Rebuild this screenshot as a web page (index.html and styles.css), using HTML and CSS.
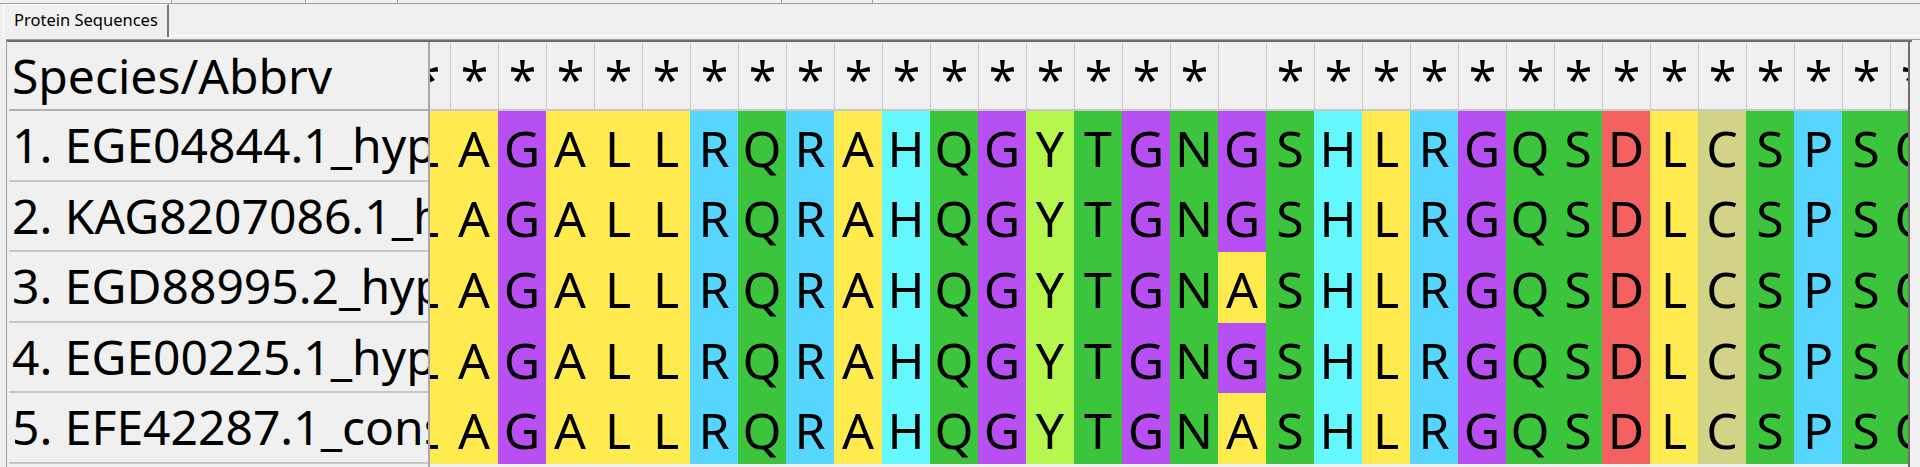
FILE: index.html
```html
<!DOCTYPE html>
<html>
<head>
<meta charset="utf-8">
<link rel="stylesheet" href="styles.css">
</head>
<body>
<div class="statusbar">
  <div class="seg s1"></div><div class="seg s2"></div><div class="seg s3"></div><div class="seg s4"></div><div class="seg s5"></div><div class="seg s6"></div>
</div>
<div class="tabbar">
  <div class="tab">Protein Sequences</div>
  <div class="tabrest"></div>
</div>
<div class="panel">
  <div class="frame">
    <div class="names">
      <div class="name head">Species/Abbrv</div>
      <div class="name">1. EGE04844.1_hypothetical_protein</div>
      <div class="name">2. KAG8207086.1_hypothetical_protein</div>
      <div class="name">3. EGD88995.2_hypothetical_protein</div>
      <div class="name">4. EGE00225.1_hypothetical_protein</div>
      <div class="name">5. EFE42287.1_conserved_hypothetical</div>
    </div>
    <div class="seqview">
      <div class="seqgrid">
        <span class="hd">*</span><span class="hd">*</span><span class="hd">*</span><span class="hd">*</span><span class="hd">*</span><span class="hd">*</span><span class="hd">*</span><span class="hd">*</span><span class="hd">*</span><span class="hd">*</span><span class="hd">*</span><span class="hd">*</span><span class="hd">*</span><span class="hd">*</span><span class="hd">*</span><span class="hd">*</span><span class="hd">*</span><span class="hd"></span><span class="hd">*</span><span class="hd">*</span><span class="hd">*</span><span class="hd">*</span><span class="hd">*</span><span class="hd">*</span><span class="hd">*</span><span class="hd">*</span><span class="hd">*</span><span class="hd">*</span><span class="hd">*</span><span class="hd">*</span><span class="hd">*</span><span class="hd">*</span>

        <span class="y">L</span><span class="y">A</span><span class="g">G</span><span class="y">A</span><span class="y">L</span><span class="y">L</span><span class="b">R</span><span class="n">Q</span><span class="b">R</span><span class="y">A</span><span class="c">H</span><span class="n">Q</span><span class="g">G</span><span class="l">Y</span><span class="n">T</span><span class="g">G</span><span class="n">N</span><span class="g">G</span><span class="n">S</span><span class="c">H</span><span class="y">L</span><span class="b">R</span><span class="g">G</span><span class="n">Q</span><span class="n">S</span><span class="d">D</span><span class="y">L</span><span class="k">C</span><span class="n">S</span><span class="b">P</span><span class="n">S</span><span class="n">Q</span>

        <span class="y">L</span><span class="y">A</span><span class="g">G</span><span class="y">A</span><span class="y">L</span><span class="y">L</span><span class="b">R</span><span class="n">Q</span><span class="b">R</span><span class="y">A</span><span class="c">H</span><span class="n">Q</span><span class="g">G</span><span class="l">Y</span><span class="n">T</span><span class="g">G</span><span class="n">N</span><span class="g">G</span><span class="n">S</span><span class="c">H</span><span class="y">L</span><span class="b">R</span><span class="g">G</span><span class="n">Q</span><span class="n">S</span><span class="d">D</span><span class="y">L</span><span class="k">C</span><span class="n">S</span><span class="b">P</span><span class="n">S</span><span class="n">Q</span>

        <span class="y">L</span><span class="y">A</span><span class="g">G</span><span class="y">A</span><span class="y">L</span><span class="y">L</span><span class="b">R</span><span class="n">Q</span><span class="b">R</span><span class="y">A</span><span class="c">H</span><span class="n">Q</span><span class="g">G</span><span class="l">Y</span><span class="n">T</span><span class="g">G</span><span class="n">N</span><span class="y">A</span><span class="n">S</span><span class="c">H</span><span class="y">L</span><span class="b">R</span><span class="g">G</span><span class="n">Q</span><span class="n">S</span><span class="d">D</span><span class="y">L</span><span class="k">C</span><span class="n">S</span><span class="b">P</span><span class="n">S</span><span class="n">Q</span>

        <span class="y">L</span><span class="y">A</span><span class="g">G</span><span class="y">A</span><span class="y">L</span><span class="y">L</span><span class="b">R</span><span class="n">Q</span><span class="b">R</span><span class="y">A</span><span class="c">H</span><span class="n">Q</span><span class="g">G</span><span class="l">Y</span><span class="n">T</span><span class="g">G</span><span class="n">N</span><span class="g">G</span><span class="n">S</span><span class="c">H</span><span class="y">L</span><span class="b">R</span><span class="g">G</span><span class="n">Q</span><span class="n">S</span><span class="d">D</span><span class="y">L</span><span class="k">C</span><span class="n">S</span><span class="b">P</span><span class="n">S</span><span class="n">Q</span>

        <span class="y">L</span><span class="y">A</span><span class="g">G</span><span class="y">A</span><span class="y">L</span><span class="y">L</span><span class="b">R</span><span class="n">Q</span><span class="b">R</span><span class="y">A</span><span class="c">H</span><span class="n">Q</span><span class="g">G</span><span class="l">Y</span><span class="n">T</span><span class="g">G</span><span class="n">N</span><span class="y">A</span><span class="n">S</span><span class="c">H</span><span class="y">L</span><span class="b">R</span><span class="g">G</span><span class="n">Q</span><span class="n">S</span><span class="d">D</span><span class="y">L</span><span class="k">C</span><span class="n">S</span><span class="b">P</span><span class="n">S</span><span class="n">Q</span>
      </div>
    </div>
    <div class="rightedge"></div>
  </div>
</div>
</body>
</html>
```

FILE: styles.css
```css
html, body {
  margin: 0;
  padding: 0;
}
body {
  width: 1920px;
  height: 467px;
  overflow: hidden;
  background: #f0f0f0;
  font-family: "Noto Sans", "Open Sans", sans-serif;
  color: #000;
}

/* top status strip (cut off) */
.statusbar {
  display: flex;
  height: 4px;
  box-sizing: border-box;
  border-bottom: 1px solid #a0a0a0;
}
.seg {
  box-sizing: border-box;
  border-right: 1px solid #a0a0a0;
  height: 3px;
}
.s1 { width: 172px; }
.s2 { width: 134px; }
.s3 { width: 92px; }
.s4 { width: 384px; }
.s5 { width: 91px; }
.s6 { flex: 1; border-right: none; }

/* tab bar */
.tabbar {
  display: flex;
  align-items: flex-end;
  height: 33px;
  padding-left: 3px;
}
.tab {
  box-sizing: border-box;
  height: 33px;
  padding: 0 9px 0 10px;
  border-top: 1px solid #ffffff;
  border-left: 1px solid #ffffff;
  border-right: 2px solid #7a7a7a;
  font-size: 16.5px;
  line-height: 30px;
  background: #f0f0f0;
  white-space: nowrap;
}
.tabrest {
  flex: 1;
  height: 1px;
  background: #ffffff;
  margin-bottom: 1px;
}

/* panel with alignment view */
.panel {
  padding: 2px 0 0 6px;
}
.frame {
  display: flex;
  height: 428px;
  box-sizing: border-box;
  border-top: 1px solid #a0a0a0;
  border-left: 1px solid #a0a0a0;
  position: relative;
}
.frame::before {
  content: "";
  position: absolute;
  left: 0;
  right: 8px;
  top: 0;
  height: 2px;
  background: #6e6e6e;
}

.names {
  display: flex;
  flex-direction: column;
  width: 423px;
  flex: none;
  box-sizing: border-box;
  padding-top: 3px;
  padding-left: 2px;
  border-right: 2px solid #a8a8a8;
}
.name {
  box-sizing: border-box;
  height: 70.6px;
  font-size: 48px;
  line-height: 68px;
  padding-left: 3px;
  white-space: nowrap;
  overflow: hidden;
  border-bottom: 2px solid #c6c6c6;
  background: #f0f0f0;
}
.name.head {
  height: 68px;
  line-height: 66px;
  border-bottom: 2px solid #b0b0b0;
}

.seqview {
  flex: none;
  width: 1478px;
  overflow: hidden;
  padding-top: 3px;
}
.seqgrid {
  display: grid;
  grid-template-columns: repeat(32, 48px);
  grid-template-rows: 68px repeat(5, 70.6px);
  margin-left: -28px;
  width: max-content;
  font-size: 50px;
}
.seqgrid span {
  display: flex;
  justify-content: center;
  align-items: center;
  padding-top: 3px;
  box-sizing: border-box;
}
.seqgrid .hd {
  background: #f0f0f0;
  border-left: 1px solid #c8c8c8;
  border-bottom: 2px solid #c8c8c8;
  padding-top: 6px;
}

.y { background: #ffeb4f; }
.g { background: #b84ff3; }
.b { background: #56d5fe; }
.n { background: #3cc43c; }
.c { background: #64f8fe; }
.l { background: #b5f64f; }
.d { background: #f46161; }
.k { background: #d3d387; }

.rightedge {
  flex: none;
  width: 10px;
  box-sizing: border-box;
  border-left: 2px solid #6e6e6e;
  margin-top: 2px;
}
```
